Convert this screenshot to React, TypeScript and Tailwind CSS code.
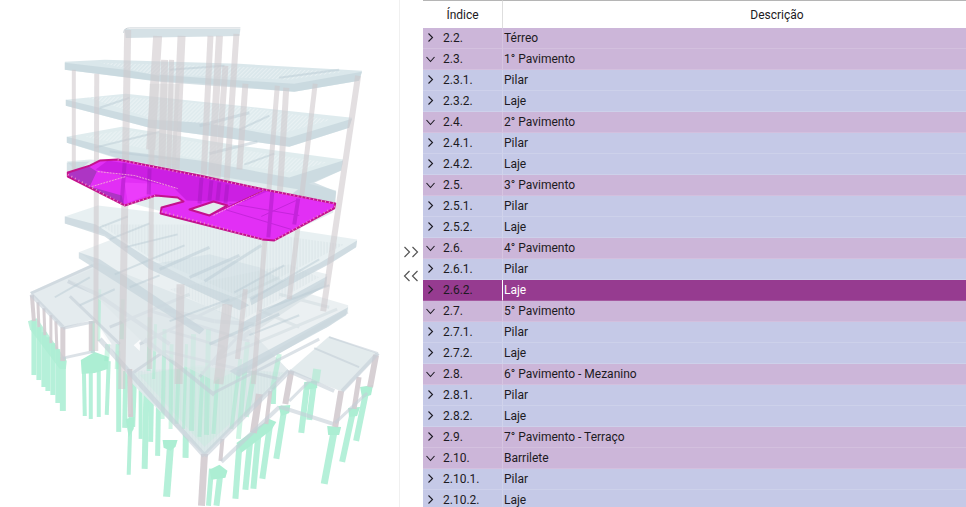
import { useState } from 'react';

type Row = {
  index: string;
  label: string;
  group?: boolean;
  open?: boolean;
};

type Member = [number, number, number, number, number];

const initialRows: Row[] = [
  { index: '2.2.', label: 'Térreo', group: true },
  { index: '2.3.', label: '1° Pavimento', group: true, open: true },
  { index: '2.3.1.', label: 'Pilar' },
  { index: '2.3.2.', label: 'Laje' },
  { index: '2.4.', label: '2° Pavimento', group: true, open: true },
  { index: '2.4.1.', label: 'Pilar' },
  { index: '2.4.2.', label: 'Laje' },
  { index: '2.5.', label: '3° Pavimento', group: true, open: true },
  { index: '2.5.1.', label: 'Pilar' },
  { index: '2.5.2.', label: 'Laje' },
  { index: '2.6.', label: '4° Pavimento', group: true, open: true },
  { index: '2.6.1.', label: 'Pilar' },
  { index: '2.6.2.', label: 'Laje' },
  { index: '2.7.', label: '5° Pavimento', group: true, open: true },
  { index: '2.7.1.', label: 'Pilar' },
  { index: '2.7.2.', label: 'Laje' },
  { index: '2.8.', label: '6° Pavimento - Mezanino', group: true, open: true },
  { index: '2.8.1.', label: 'Pilar' },
  { index: '2.8.2.', label: 'Laje' },
  { index: '2.9.', label: '7° Pavimento - Terraço', group: true },
  { index: '2.10.', label: 'Barrilete', group: true, open: true },
  { index: '2.10.1.', label: 'Pilar' },
  { index: '2.10.2.', label: 'Laje' },
];

// x1, y1, x2, y2, thickness
const columns: Member[] = [
  [128, 30, 122, 390, 7],
  [158, 36, 151, 150, 9],
  [153, 84, 150, 370, 5],
  [182, 36, 176, 170, 8],
  [211, 36, 203, 200, 6],
  [220, 36, 211, 200, 7],
  [237, 34, 226, 200, 6],
  [165, 60, 162, 175, 7],
  [172, 60, 169, 175, 5],
  [226, 66, 217, 195, 6],
  [246, 84, 240, 170, 6],
  [74, 70, 74, 175, 4],
  [97, 74, 96, 352, 5],
  [278, 86, 254, 385, 5],
  [287, 88, 278, 235, 6],
  [316, 84, 290, 300, 5],
  [359, 76, 324, 312, 6],
  [181, 285, 179, 385, 8],
  [228, 305, 219, 385, 10],
  [246, 290, 238, 360, 5],
];

const lowerColumns: Member[] = [
  [32, 296, 34, 322, 4],
  [38, 303, 39, 328, 3],
  [44, 309, 45, 336, 3],
  [51, 316, 51, 344, 3],
  [56, 322, 57, 350, 3],
  [63, 328, 63, 362, 5],
  [91, 322, 91, 352, 4],
  [377, 356, 371, 388, 6],
  [360, 378, 355, 410, 5],
  [342, 392, 336, 428, 6],
  [292, 372, 286, 405, 6],
  [260, 395, 254, 434, 7],
  [271, 392, 267, 425, 4],
  [130, 370, 131, 418, 5],
  [223, 440, 221, 462, 4],
  [205, 455, 202, 507, 7],
];

const piles: Member[] = [
  [34, 322, 34, 376, 5],
  [39, 328, 39, 381, 5],
  [44, 333, 44, 388, 5],
  [48, 338, 48, 392, 5],
  [53, 344, 53, 396, 5],
  [58, 350, 58, 404, 5],
  [63, 358, 63, 412, 6],
  [84, 366, 85, 417, 4],
  [91, 366, 91, 420, 4],
  [99, 366, 99, 418, 4],
  [109, 362, 107, 416, 4],
  [93, 322, 93, 354, 4],
  [119, 352, 119, 433, 5],
  [126, 372, 125, 429, 5],
  [131, 415, 129, 476, 4],
  [135, 375, 133, 428, 5],
  [147, 384, 145, 470, 6],
  [152, 390, 151, 443, 5],
  [159, 398, 158, 457, 5],
  [171, 446, 167, 498, 7],
  [187, 380, 186, 459, 6],
  [141, 372, 141, 440, 4],
  [212, 470, 209, 507, 5],
  [221, 474, 217, 507, 6],
  [240, 446, 236, 500, 6],
  [251, 440, 246, 491, 6],
  [259, 436, 254, 490, 6],
  [271, 424, 263, 480, 6],
  [285, 410, 277, 460, 6],
  [308, 384, 302, 434, 6],
  [315, 382, 310, 421, 6],
  [335, 432, 325, 485, 7],
  [354, 412, 343, 463, 6],
  [367, 393, 357, 442, 6],
  [275, 375, 274, 405, 5],
];

const innerPiles: Member[] = [
  [165, 330, 163, 420, 4],
  [172, 345, 171, 430, 4],
  [179, 370, 177, 425, 4],
  [194, 335, 192, 432, 5],
  [203, 372, 200, 438, 4],
  [209, 330, 207, 436, 5],
  [218, 378, 214, 435, 4],
  [248, 343, 239, 440, 5],
  [255, 372, 247, 418, 5],
  [280, 355, 273, 390, 5],
  [118, 345, 117, 370, 4],
  [150, 318, 149, 372, 4],
  [100, 290, 99, 342, 3],
  [187, 345, 184, 430, 3],
  [241, 360, 232, 430, 4],
  [318, 370, 316, 384, 8],
  [156, 325, 154, 380, 3],
  [108, 345, 107, 362, 5],
  [123, 300, 122, 340, 4],
];

const beams: Member[] = [
  [31, 294, 93, 266, 3],
  [31, 295, 63, 328, 4],
  [63, 329, 96, 322, 3],
  [63, 359, 95, 352, 3],
  [70, 297, 120, 345, 3],
  [68, 282, 96, 294, 4],
  [96, 294, 170, 345, 4],
  [100, 340, 205, 457, 5],
  [152, 312, 250, 342, 3],
  [110, 328, 190, 295, 3],
  [133, 374, 165, 352, 3],
  [165, 352, 280, 380, 3],
  [205, 457, 290, 372, 5],
  [290, 372, 335, 392, 4],
  [343, 392, 379, 354, 4],
  [281, 408, 334, 425, 4],
  [336, 424, 368, 394, 3],
  [222, 463, 280, 408, 4],
  [290, 402, 312, 380, 3],
  [330, 338, 379, 354, 2],
  [315, 349, 360, 368, 2],
  [218, 360, 338, 310, 3],
  [238, 376, 348, 312, 5],
  [140, 345, 280, 278, 3],
  [240, 340, 326, 283, 5],
  [165, 310, 215, 322, 4],
  [215, 322, 255, 325, 4],
  [170, 332, 225, 348, 3],
  [145, 340, 215, 396, 4],
  [225, 348, 200, 378, 3],
  [250, 325, 212, 366, 3],
  [212, 395, 320, 340, 3],
  [280, 295, 330, 308, 3],
  [262, 312, 300, 328, 3],
];

const streaks: Member[] = [
  [110, 240, 150, 224, 2],
  [125, 248, 178, 235, 2],
  [100, 228, 128, 217, 2],
  [160, 270, 210, 248, 3],
  [190, 278, 240, 256, 3],
  [205, 282, 262, 246, 3],
  [235, 293, 285, 266, 2],
  [252, 300, 320, 260, 2],
  [115, 275, 185, 246, 2],
  [130, 288, 160, 276, 2],
  [170, 322, 230, 300, 2],
  [210, 345, 280, 315, 3],
  [260, 312, 330, 286, 2],
  [250, 336, 300, 316, 2],
  [95, 148, 160, 132, 2],
  [110, 152, 180, 160, 2],
  [210, 154, 258, 142, 3],
  [245, 165, 275, 154, 2],
  [200, 126, 250, 113, 3],
  [240, 130, 270, 116, 2],
  [100, 108, 130, 98, 2],
  [170, 70, 225, 66, 2],
  [280, 78, 340, 70, 2],
  [55, 298, 90, 278, 2],
  [80, 306, 115, 290, 2],
];

const Lines = ({ items, color, opacity }: { items: Member[]; color: string; opacity: number }) => (
  <g stroke={color} opacity={opacity}>
    {items.map(([x1, y1, x2, y2, w], i) => (
      <line key={i} x1={x1} y1={y1} x2={x2} y2={y2} strokeWidth={w} />
    ))}
  </g>
);

const BuildingModel = () => (
  <svg viewBox="0 0 400 507" className="block w-full" role="img" aria-label="Modelo 3D">
    <defs>
      <pattern id="ribs" width="3" height="4" patternUnits="userSpaceOnUse">
        <path d="M1 0V4" stroke="#c3d2d8" strokeWidth="1" opacity=".45" />
      </pattern>
      <pattern id="mesh" width="4" height="4" patternUnits="userSpaceOnUse">
        <path d="M0 4L4 0" stroke="#ffffff" strokeWidth="1" opacity=".5" />
      </pattern>
    </defs>

    {/* foundations */}
    <Lines items={piles} color="#b2f0d7" opacity={0.95} />
    <g fill="#aceed3">
      <path d="M28 322L37 319 67 362 66 370 60 370 30 330z" opacity=".8" />
      <path d="M81 361L95 353 109 358 108 370 95 374 82 375z" />
      <path d="M163 441L178 441 176 448 171 452 164 449z" />
      <path d="M210 471L220 466 228 472 226 479 212 481z" />
      <path d="M237 444L270 420 277 423 272 431 242 454z" />
      <path d="M279 407L291 406 290 414 282 417z" />
      <path d="M328 427L342 428 340 436 329 436z" />
      <path d="M349 409L361 408 358 417 350 418z" />
      <path d="M361 388L374 386 372 396 363 399z" />
      <path d="M305 383L318 382 318 389 306 391z" />
      <path d="M126 420L135 418 134 430 129 438z" />
    </g>

    {/* ground level */}
    <g fill="#e1e9ec" opacity=".9">
      <path d="M30 293L97 263 240 320 290 372 205 457 133 385 94 320 63 329z" />
      <path d="M330 337L380 355 344 393 290 372z" />
    </g>
    <path d="M97 323L112 345 96 350z" fill="#fff" opacity=".8" />
    <path d="M134 346L141 340 140 352z" fill="#fff" opacity=".8" />
    <path d="M133 374L200 368 285 374 205 457z" fill="#dcebea" opacity=".7" />
    <path d="M140 376L200 366 240 374 230 425 205 448z" fill="#c9efe1" opacity=".5" />
    <Lines items={innerPiles} color="#9eeccb" opacity={0.5} />
    <Lines items={lowerColumns} color="#d3cbd0" opacity={0.9} />
    <Lines items={beams} color="#c5cfd8" opacity={0.6} />
    <path d="M133 372L200 368 284 373 205 455z" fill="url(#ribs)" />

    {/* lower floors */}
    <g opacity=".6">
      <path d="M68 280L96 268 200 262 349 306 349 313 330 327 215 382 150 350 96 297z" fill="#dfe7ea" />
      <path d="M79 253L112 240 210 245 328 275 327 286 240 334 205 336 150 301z" fill="#dde7ea" />
      <path d="M65 217L98 206 260 225 358 240 357 248 330 264 240 309 150 268 105 235 65 224z" fill="#dae7ea" />
    </g>
    <g fill="#c8d6dd" opacity=".75">
      <path d="M65 217L96 225 150 260 200 285 240 300 250 306 240 311 150 270 105 237 65 224z" />
      <path d="M79 253L100 260 150 293 205 330 200 335 150 304 79 259z" />
      <path d="M358 241L357 248 330 265 252 306 250 298 320 264z" />
      <path d="M328 277L327 287 240 332 240 325z" />
      <path d="M349 308L347 316 328 328 238 377 230 372z" />
      <path d="M152 265L210 255 260 268 290 285 240 302z" opacity=".45" />
    </g>
    <path d="M100 225L200 225 345 245 242 298 150 258z" fill="url(#ribs)" />
    <path d="M170 290L290 265 320 278 240 322z" fill="url(#ribs)" />

    {/* upper floors */}
    <g opacity=".8">
      <path d="M67 162L90 160 260 172 337 191 334 213 272 242 100 195z" fill="#dbe8eb" />
      <path d="M67 137L122 127 240 146 344 160 342 171 296 190 175 172 130 163 67 143z" fill="#d9e8eb" />
      <path d="M66 100L126 94 240 106 353 118 350 128 290 147 150 128 66 106z" fill="#d8e7eb" />
      <path d="M65 62L105 60 240 64 363 71 360 81 295 92 205 84 155 81 65 70z" fill="#d2e2e7" />
    </g>
    <g fill="#c4d5dc" opacity=".7">
      <path d="M65 63L125 70 160 76 160 82 65 70z" />
      <path d="M160 75L215 79 295 84 363 72 360 81 295 92 160 82z" />
      <path d="M66 100L150 120 205 123 290 138 353 119 350 128 290 147 150 128 66 106z" />
      <path d="M67 137L120 151 200 161 290 178 344 161 342 171 300 190 190 172 120 159 67 143z" />
      <path d="M67 163L90 162 80 170 67 174z" />
      <path d="M310 181L337 192 336 205 292 195z" />
      <path d="M125 29L241 29 240 36 126 38z" />
    </g>
    <g fill="url(#mesh)">
      <path d="M85 97L125 97 250 108 332 120 285 133 150 118z" />
      <path d="M85 137L125 130 240 150 328 163 290 173 190 158z" />
      <path d="M100 63L240 67 345 72 290 80 150 74z" />
    </g>
    <Lines items={streaks} color="#bccdd6" opacity={0.5} />
    <Lines items={columns} color="#cfc9cd" opacity={0.58} />
    <path d="M150 84L180 84 176 165 148 165z" fill="#cfcfd2" opacity=".4" />
    <path d="M124 33Q124 28 130 28H241" fill="none" stroke="#ccd3d8" strokeWidth="1" />

    {/* selected slab */}
    <path
      fillRule="evenodd"
      d="M68 173L90 166 100 161 118 160 200 176 270 191 336 204 335 209 275 241 263 240 161 214 162 208 184 202 178 198 156 196 125 206 68 177zM190 210L210 216 228 206 214 202z"
      fill="#e22ff5"
    />
    <path d="M69 173L89 167 97 172 90 187 122 196 124 205 68 177z" fill="#ad35c4" />
    <path d="M108 161L200 176 270 191 245 202 214 202 187 201 174 188 130 178 96 170z" fill="#c41bdc" opacity=".75" />
    <path d="M125 183L149 184 150 195 128 203z" fill="#f246ff" opacity=".6" />
    <g stroke="#a218bd" opacity=".45">
      <path d="M125 163L122 204M150 169L149 195M202 178L200 204M212 181L210 201M220 183L218 201M228 185L226 204" strokeWidth="4" />
      <path d="M273 192L269 238M299 199L295 225" strokeWidth="4" />
      <path d="M222 209L292 230M262 217L299 200M230 204L300 216" fill="none" strokeWidth="1" />
    </g>
    <path d="M98 172L135 176 178 189M92 187L126 177M214 216L264 191" fill="none" stroke="#f2a3d4" strokeWidth="1" strokeDasharray="2 1" />
    <g fill="none" stroke="#c3128d" strokeWidth="2" strokeLinejoin="round">
      <path d="M68 173L90 166 100 161 118 160 200 176 270 191 336 204 335 209 275 241 263 240 161 214 162 208 184 202 178 198 156 196 125 206 68 177z" />
      <path d="M190 210L210 216 228 206 214 202z" />
      <path d="M210 216L264 191" strokeWidth="1" />
    </g>
    <path
      d="M68 175L125 206 156 196 M162 212L263 240 M118 160L270 191 336 204M336 207L275 241"
      fill="none"
      stroke="#ee8bc6"
      strokeWidth="2"
      strokeDasharray="1 3"
    />
  </svg>
);

const Caret = ({ open }: { open?: boolean }) => (
  <svg width="10" height="10" viewBox="0 0 10 10" fill="none" stroke="currentColor" strokeWidth="1.1">
    <path d={open ? 'M.5 3L4.5 7.5L8.5 3' : 'M2.5 .5L6.5 4.5L2.5 8.5'} />
  </svg>
);

const DoubleArrow = ({ left }: { left?: boolean }) => (
  <svg width="16" height="12" viewBox="0 0 16 12" fill="none" stroke="#555" strokeWidth="1.2">
    <path d={left ? 'M6.5 1L1.5 6L6.5 11M14.5 1L9.5 6L14.5 11' : 'M1.5 1L6.5 6L1.5 11M9.5 1L14.5 6L9.5 11'} />
  </svg>
);

const rowColor = (row: Row, selected: boolean) => {
  if (selected) return 'bg-[#963b90]';
  return row.group ? 'bg-[#ccb6d9]' : 'bg-[#c5c9e7]';
};

export default function App() {
  const [rows, setRows] = useState(initialRows);
  const [selected, setSelected] = useState('2.6.2.');

  const toggle = (index: string) => {
    setRows((prev) => prev.map((r) => (r.index === index ? { ...r, open: !r.open } : r)));
  };

  return (
    <main className="grid h-screen grid-cols-[400fr_23px_543fr] overflow-hidden bg-white font-[Roboto,'Noto_Sans',sans-serif] text-xs text-[#1c1a22]">
      <section className="overflow-hidden border-r border-[#f0f0f0]">
        <BuildingModel />
      </section>

      <div className="flex flex-col items-center justify-center gap-3 pt-5 pr-0.5">
        <button aria-label="Expandir tudo">
          <DoubleArrow />
        </button>
        <button aria-label="Recolher tudo">
          <DoubleArrow left />
        </button>
      </div>

      <div className="overflow-hidden">
        <table className="w-full min-w-[628px] table-fixed border-separate border-spacing-0">
          <thead>
            <tr className="h-7">
              <th className="w-20 border-t border-r border-t-[#b5b5b5] border-r-[#dedede] p-0 font-normal">Índice</th>
              <th className="border-t border-[#b5b5b5] p-0 font-normal">Descrição</th>
            </tr>
          </thead>
          <tbody>
            {rows.map((row) => {
              const active = row.index === selected;
              return (
                <tr key={row.index} className={`h-[21px] ${rowColor(row, active)}`} onClick={() => setSelected(row.index)}>
                  <td className={`border-r border-b border-b-white/15 p-0 ${active ? 'border-r-white' : 'border-r-white/20'}`}>
                    <div className="flex items-center gap-[7px] pl-[3px]">
                      <button aria-label={`Alternar ${row.index}`} onClick={() => toggle(row.index)}>
                        <Caret open={row.open} />
                      </button>
                      <span>{row.index}</span>
                    </div>
                  </td>
                  <td className={`border-b border-white/15 p-0 pl-px ${active ? 'text-white' : ''}`}>{row.label}</td>
                </tr>
              );
            })}
          </tbody>
        </table>
      </div>
    </main>
  );
}
